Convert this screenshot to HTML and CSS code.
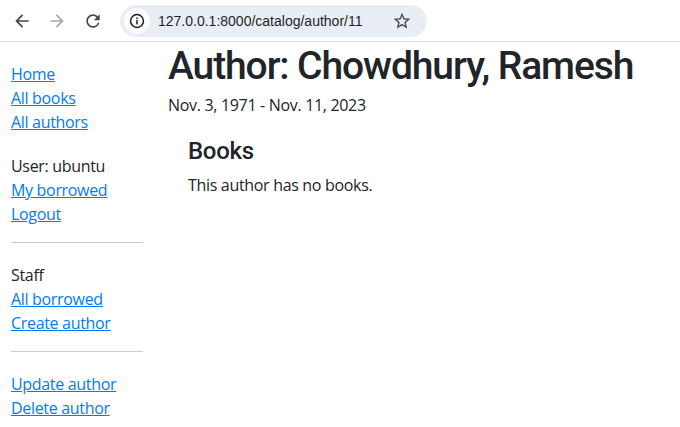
FILE: index.html
```html
<!DOCTYPE html>
<html>
<head>
<meta charset="utf-8">
<link rel="stylesheet" href="styles.css">
</head>
<body>
<div class="chrome">
  <div class="nav-btn">
    <svg viewBox="0 0 24 24" width="20" height="20"><path fill="#474747" d="M20 11H7.83l5.59-5.59L12 4l-8 8 8 8 1.41-1.41L7.83 13H20v-2z"/></svg>
  </div>
  <div class="nav-btn">
    <svg viewBox="0 0 24 24" width="20" height="20"><path fill="#a8a8a8" d="M4 11h12.17l-5.59-5.59L12 4l8 8-8 8-1.41-1.41L16.17 13H4v-2z"/></svg>
  </div>
  <div class="nav-btn">
    <svg viewBox="0 0 24 24" width="20" height="20"><path fill="#474747" d="M17.65 6.35A7.958 7.958 0 0012 4c-4.42 0-7.99 3.58-7.99 8s3.57 8 7.99 8c3.73 0 6.84-2.55 7.73-6h-2.08A5.990 5.990 0 0112 18c-3.310 0-6-2.69-6-6s2.69-6 6-6c1.66 0 3.14.69 4.22 1.78L13 11h7V4l-2.35 2.35z"/></svg>
  </div>
  <div class="omnibox">
    <div class="info">
      <svg viewBox="0 0 24 24" width="18" height="18"><circle cx="12" cy="12" r="8.6" fill="none" stroke="#1f1f1f" stroke-width="2"/><rect x="11" y="10.5" width="2" height="6" fill="#1f1f1f"/><rect x="11" y="7.3" width="2" height="2" fill="#1f1f1f"/></svg>
    </div>
    <span class="url">127.0.0.1:8000/catalog/author/11</span>
    <svg class="star" viewBox="0 0 24 24" width="20" height="20"><path fill="#474747" d="M22 9.24l-7.19-.62L12 2 9.19 8.63 2 9.24l5.46 4.73L5.82 21 12 17.27 18.18 21l-1.63-7.03L22 9.24zM12 15.4l-3.76 2.27 1-4.28-3.32-2.88 4.38-.38L12 6.1l1.71 4.04 4.38.38-3.320 2.88 1 4.28L12 15.4z"/></svg>
  </div>
</div>
<div class="page">
  <aside class="sidebar">
    <ul class="sidebar-nav">
      <li><a href="#">Home</a></li>
      <li><a href="#">All books</a></li>
      <li><a href="#">All authors</a></li>
    </ul>
    <ul class="sidebar-nav">
      <li>User: ubuntu</li>
      <li><a href="#">My borrowed</a></li>
      <li><a href="#">Logout</a></li>
    </ul>
    <hr>
    <ul class="sidebar-nav">
      <li>Staff</li>
      <li><a href="#">All borrowed</a></li>
      <li><a href="#">Create author</a></li>
    </ul>
    <hr>
    <ul class="sidebar-nav">
      <li><a href="#">Update author</a></li>
      <li><a href="#">Delete author</a></li>
    </ul>
  </aside>
  <main class="content">
    <h1>Author: Chowdhury, Ramesh</h1>
    <p class="dates">Nov. 3, 1971 - Nov. 11, 2023</p>
    <div class="books">
      <h4>Books</h4>
      <p>This author has no books.</p>
    </div>
  </main>
</div>
</body>
</html>
```
FILE: styles.css
```css
html, body {
  margin: 0;
  padding: 0;
  background: #fff;
}
body {
  font-family: "Open Sans", "Noto Sans", sans-serif;
  font-size: 16px;
  line-height: 24px;
  letter-spacing: -0.32px;
  color: #212529;
}
.chrome {
  height: 41px;
  border-bottom: 1px solid #e3e3e3;
  display: flex;
  align-items: center;
  padding-left: 12px;
  letter-spacing: 0;
}
.nav-btn {
  width: 36px;
  height: 32px;
  display: flex;
  align-items: center;
  justify-content: center;
  margin-right: -1px;
}
.nav-btn:first-child { margin-left: -8px; }
.nav-btn:nth-child(3) { margin-left: 1px; }
.omnibox {
  margin-left: 10px;
  width: 307px;
  height: 32px;
  border-radius: 16px;
  background: #e9eef6;
  display: flex;
  align-items: center;
  padding-left: 4px;
  box-sizing: border-box;
}
.info {
  width: 26px;
  height: 26px;
  border-radius: 50%;
  background: #f9fbfd;
  display: flex;
  align-items: center;
  justify-content: center;
}
.url {
  margin-left: 8px;
  font-family: "Liberation Sans", Arial, sans-serif;
  font-size: 14px;
  color: #1f1f1f;
}
.star {
  margin-left: auto;
  margin-right: 15px;
}
.page {
  display: flex;
}
.sidebar {
  width: 132px;
  padding-left: 11px;
  flex: none;
}
.sidebar-nav {
  list-style: none;
  padding: 0;
  margin: 20px 0 16px;
}
.sidebar hr {
  margin: 16px 0;
  border: 0;
  border-top: 1px solid #cccccc;
  height: 0;
}
a {
  color: #007bff;
  text-decoration: underline;
}
.content {
  margin-left: 25px;
}
h1 {
  font-family: Roboto, sans-serif;
  font-size: 39px;
  line-height: 46px;
  font-weight: 500;
  letter-spacing: -1.1px;
  margin: 1px 0 4px;
}
.dates {
  margin: 0 0 20px;
}
.books {
  margin-left: 20px;
}
h4 {
  font-family: Roboto, sans-serif;
  font-size: 24px;
  line-height: 29px;
  font-weight: 500;
  letter-spacing: -0.3px;
  margin: 0 0 7px;
}
.books p {
  margin: 0;
}
```
